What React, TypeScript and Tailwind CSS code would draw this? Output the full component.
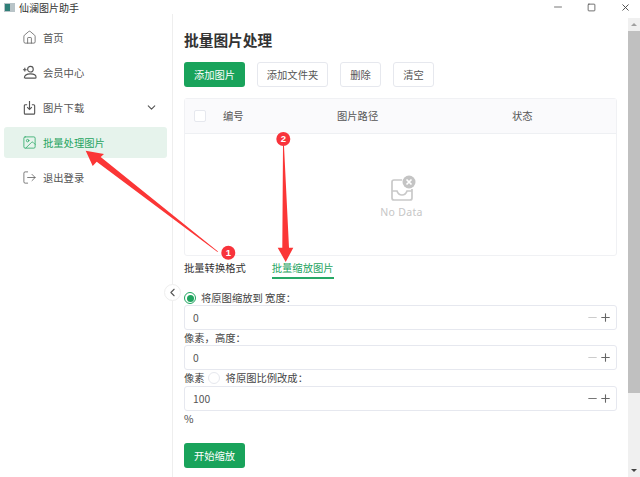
import { ChevronDown, ChevronLeft, House, Minus, Plus, Square, X, Image, LogOut } from "lucide-react";
import type { SVGProps } from "react";

const font = { fontFamily: '"Noto Sans CJK SC", "Liberation Sans", sans-serif' };

// Person with a plus sign at the upper left
function MemberIcon(props: SVGProps<SVGSVGElement>) {
  return (
    <svg viewBox="0 0 16 16" fill="none" stroke="currentColor" strokeWidth="1.1" {...props}>
      <circle cx="9" cy="4.5" r="3" />
      <path d="M2.5 14c0-3 2.5-4.5 6.5-4.5s6 1.500 6 3.500c0 .7-.5 1-1 1H3" />
      <path d="M1 5h4M3 3v4" />
    </svg>
  );
}

// Tray with an arrow dropping into it
function SaveIcon(props: SVGProps<SVGSVGElement>) {
  return (
    <svg viewBox="0 0 16 16" fill="none" stroke="currentColor" strokeWidth="1.1" {...props}>
      <path d="M5.500 5H3.500a1 1 0 0 0-1 1v8a1 1 0 0 0 1 1h9a1 1 0 0 0 1-1V6a1 1 0 0 0-1-1h-2" />
      <path d="M8 1v8.500M5.500 7.500L8 10l2.500-2.500" />
    </svg>
  );
}

const menu = [
  { label: "首页", Icon: House },
  { label: "会员中心", Icon: MemberIcon },
  { label: "图片下载", Icon: SaveIcon, caret: true },
  { label: "批量处理图片", Icon: Image, active: true },
  { label: "退出登录", Icon: LogOut },
];

function Stepper({ value, dim }: { value: string; dim?: boolean }) {
  return (
    <div className="flex h-[25px] w-[433px] shrink-0 items-center justify-between rounded-[3px] border border-[#e6e8ef] pl-[8px] pr-[4px] text-[10.3px] text-[#555]">
      <span>{value}</span>
      <span className="flex items-center">
        <Minus size={13} className={dim ? "text-[#ccc]" : "text-[#777]"} />
        <Plus size={13} className="text-[#666]" />
      </span>
    </div>
  );
}

function Outline({ children, w }: { children: string; w: string }) {
  return (
    <button className={`flex h-[25px] items-center justify-center rounded-[3px] border border-[#e6e8ee] bg-white text-[10.3px] text-[#555] ${w}`}>
      {children}
    </button>
  );
}

export default function App() {
  return (
    <div className="relative flex h-[477px] w-[640px] flex-col overflow-hidden bg-white text-[#444]" style={font}>
      {/* window title bar */}
      <header className="flex h-[14px] shrink-0 items-center pl-[4px] text-[10px] text-[#333]">
        <span className="mr-[4px] flex h-[9px] w-[11px] bg-[#b9c4c8]">
          <span className="m-[1px] w-[5px] bg-[#2f7f78]" />
        </span>
        仙澜图片助手
        <span className="ml-auto flex items-center text-[#444]">
          <Minus size={12} className="mr-[23px] text-[#777]" />
          <Square size={9} className="mr-[24px]" strokeWidth={2} />
          <X size={11} className="mr-[9px]" />
        </span>
      </header>

      <div className="flex min-h-0 flex-1">
        {/* navigation */}
        <nav className="flex w-[173px] shrink-0 flex-col gap-[4px] border-r border-[#eeeeee] pl-[4px] pr-[5px] pt-[8px]">
          {menu.map(({ label, Icon, caret, active }) => (
            <div
              key={label}
              className={`flex h-[31px] items-center rounded-[3px] pl-[18px] pr-[9px] text-[10.3px] ${active ? "bg-[#e6f3ec] text-[#1fa45f]" : "text-[#555]"}`}
            >
              <Icon width={15} height={15} strokeWidth={1.2} className="mr-[6px] shrink-0" />
              {label}
              {caret && <ChevronDown size={13} className="ml-auto" />}
            </div>
          ))}
        </nav>

        {/* main panel */}
        <main className="relative flex min-w-0 flex-1 flex-col pl-[11px]">
          <h1 className="mt-[14px] text-[14.700px] leading-[24px] font-bold text-[#333]">批量图片处理</h1>
          <div className="mt-[10px] flex gap-[12px]">
            <button className="flex h-[25px] w-[61px] items-center justify-center rounded-[3px] bg-[#19a35b] text-[10.3px] text-white">添加图片</button>
            <Outline w="w-[71px]">添加文件夹</Outline>
            <Outline w="w-[41px]">删除</Outline>
            <Outline w="w-[41px]">清空</Outline>
          </div>

          <section className="mt-[11px] flex h-[158px] w-[433px] shrink-0 flex-col rounded-[3px] border border-[#f0f1f4]">
            <div className="grid h-[35px] shrink-0 grid-cols-[38px_114px_175px_1fr] items-center border-b border-[#eef0f3] bg-[#fafafc] text-[10.3px] text-[#555]">
              <span className="ml-[9px] h-[12px] w-[12px] rounded-[2px] border border-[#e6e8ee] bg-white" />
              <span>编号</span>
              <span>图片路径</span>
              <span>状态</span>
            </div>
            <div className="flex flex-1 flex-col items-center justify-center pl-[2px] pt-[6px]">
              <svg width="28" height="28" viewBox="0 0 28 28" fill="none" stroke="#c9c9c9" strokeWidth="1.7">
                <path d="M14 5H6a2 2 0 0 0-2 2v16a2 2 0 0 0 2 2h16a2 2 0 0 0 2-2v-9" />
                <path d="M4 16h5c1 3 3 4 5 4s4-1 5-4h5" />
                <circle cx="21" cy="7" r="6.500" fill="#c4c4c4" stroke="none" />
                <path d="M18.500 4.500l5 5m0-5l-5 5" stroke="#fff" />
              </svg>
              <span className="mt-[2px] text-[10.5px] tracking-[0.3px] text-[#c6c6c6]" style={{ fontFamily: '"Noto Sans", sans-serif' }}>No Data</span>
            </div>
          </section>

          <div className="mt-[4px] flex gap-[26px] text-[10.3px] leading-[16px]">
            <span className="pb-[1px] text-[#333]">批量转换格式</span>
            <span className="border-b-2 border-[#27a866] pb-[1px] text-[#1fa45f]">批量缩放图片</span>
          </div>

          <div className="mt-[12px] flex h-[14px] items-center text-[10.3px] text-[#444]">
            <span className="mr-[5px] flex h-[12px] w-[12px] items-center justify-center rounded-full border border-[#1fa45f]">
              <span className="h-[7px] w-[7px] rounded-full bg-[#1fa45f]" />
            </span>
            将原图缩放到 宽度：
          </div>
          <Stepper value="0" dim />
          <div className="flex h-[15px] items-center text-[10.3px] text-[#444]">像素，高度：</div>
          <Stepper value="0" dim />
          <div className="flex h-[16px] items-center text-[10.3px] text-[#444]">
            像素
            <span className="ml-[3px] mr-[6px] h-[12px] w-[12px] rounded-full border border-[#e6e8ee]" />
            将原图比例改成：
          </div>
          <Stepper value="100" />
          <div className="flex h-[16px] items-center text-[10.3px] text-[#444]">%</div>
          <button className="mt-[16px] flex h-[25px] w-[61px] shrink-0 items-center justify-center rounded-[3px] bg-[#19a35b] text-[10.3px] text-white">开始缩放</button>

          {/* sidebar collapse handle */}
          <span className="absolute left-[-9px] top-[270px] flex h-[17px] w-[17px] items-center justify-center rounded-full border border-[#eeeeee] bg-white text-[#555]">
            <ChevronLeft size={13} />
          </span>
        </main>

        {/* scrollbar */}
        <div className="mt-[4px] flex w-[12px] shrink-0 flex-col self-stretch bg-[#f0f0f0]">
          <span className="flex h-[13px] items-center justify-center text-[#a0a0a0]">
            <span className="h-0 w-0 border-x-[3px] border-b-[3px] border-x-transparent border-b-current" />
          </span>
          <span className="h-[362px] bg-[#c0c0c0]" />
          <span className="mt-auto flex h-[13px] items-center justify-center text-[#444]">
            <span className="h-0 w-0 border-x-[3px] border-t-[3px] border-x-transparent border-t-current" />
          </span>
        </div>
      </div>

      {/* callout arrows drawn on top of the window */}
      <svg className="absolute inset-0" width="640" height="477" viewBox="0 0 640 477">
        <polygon points="85.700,150.700 104,154 100.700,157 218,251.500 217.500,252 96.700,161.700 92.700,166" fill="#fb3636" />
        <polygon points="283,146 284,146 289,247.700 293.300,247.700 285.700,262 277.700,247.700 282.300,247.700" fill="#fb3636" />
        <circle cx="228.300" cy="252.700" r="7" fill="#f8333b" />
        <circle cx="283.300" cy="139" r="7" fill="#f8333b" />
        <text x="228.300" y="256" textAnchor="middle" fontSize="9.500" fontWeight="700" fill="#fff" fontFamily="Liberation Sans, sans-serif">1</text>
        <text x="283.300" y="142.300" textAnchor="middle" fontSize="9.500" fontWeight="700" fill="#fff" fontFamily="Liberation Sans, sans-serif">2</text>
      </svg>
    </div>
  );
}
